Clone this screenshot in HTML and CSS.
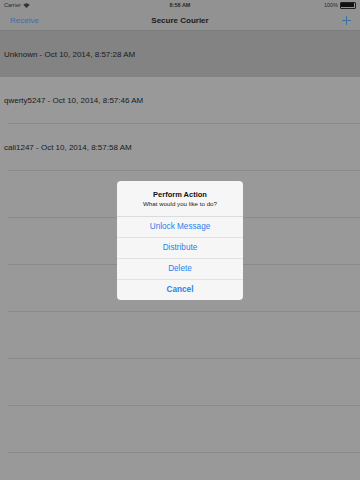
FILE: index.html
```html
<!DOCTYPE html>
<html lang="en">
<head>
    <meta charset="UTF-8">
    <meta name="viewport" content="width=device-width, initial-scale=1.0">
    <title>Secure Courier</title>
    <link rel="stylesheet" href="styles.css">
</head>
<body>
    <div class="screen">
        <div class="status-bar">
            <div class="status-left">Carrier
                <svg class="wifi" width="7" height="5" viewBox="0 0 14 10">
                    <path d="M7 10 L0.5 3.5 A9.5 9.5 0 0 1 13.5 3.5 Z" fill="#333"/>
                </svg>
            </div>
            <div class="status-time">8:58 AM</div>
            <div class="status-right">100%
                <span class="battery"><span class="battery-level"></span></span>
            </div>
        </div>
        <div class="nav-bar">
            <span class="nav-button">Receive</span>
            <span class="nav-title">Secure Courier</span>
            <svg class="nav-add" width="9" height="9" viewBox="0 0 9 9">
                <path d="M4.5 0 V9 M0 4.5 H9" stroke="#3e6fa3" stroke-width="1"/>
            </svg>
        </div>
        <div class="list">
            <div class="row selected">Unknown - Oct 10, 2014, 8:57:28 AM</div>
            <div class="row">qwerty5247 - Oct 10, 2014, 8:57:46 AM</div>
            <div class="row">cali1247 - Oct 10, 2014, 8:57:58 AM</div>
            <div class="row"></div>
            <div class="row"></div>
            <div class="row"></div>
            <div class="row"></div>
            <div class="row"></div>
            <div class="row"></div>
        </div>

        <div class="overlay">
            <div class="alert">
                <div class="alert-head">
                    <div class="alert-title">Perform Action</div>
                    <div class="alert-message">What would you like to do?</div>
                </div>
                <div class="alert-button">Unlock Message</div>
                <div class="alert-button">Distribute</div>
                <div class="alert-button">Delete</div>
                <div class="alert-button cancel">Cancel</div>
            </div>
        </div>
    </div>
</body>
</html>
```

FILE: styles.css
```css
body {
    font-family: "Liberation Sans", Arial, sans-serif;
    margin: 0;
    padding: 0;
    background-color: #999999;
    color: #1a1a1a;
}

.screen {
    position: relative;
    width: 360px;
    height: 480px;
    overflow: hidden;
}

.status-bar {
    height: 10px;
    display: flex;
    align-items: center;
    justify-content: space-between;
    padding: 0 4px;
    font-size: 5.5px;
    background-color: #929292;
    color: #2a2a2a;
}

.status-left,
.status-right {
    width: 60px;
    display: flex;
    align-items: center;
    gap: 2px;
}

.status-right {
    justify-content: flex-end;
}

.status-time {
    font-weight: bold;
}

.battery {
    width: 13px;
    height: 4px;
    border: 0.5px solid #222;
    border-radius: 1px;
    display: flex;
    padding: 0.5px;
}

.battery-level {
    flex: 1;
    background-color: #111;
}

.nav-bar {
    height: 20px;
    display: flex;
    align-items: center;
    justify-content: space-between;
    padding: 0 9px 0 10px;
    background-color: #929292;
    border-bottom: 1px solid #7d7d7d;
    position: relative;
}

.nav-button {
    color: #3e6fa3;
    font-size: 8px;
}

.nav-title {
    position: absolute;
    left: 0;
    right: 0;
    text-align: center;
    font-size: 8px;
    font-weight: bold;
    color: #1a1a1a;
    pointer-events: none;
}

.list {
    display: flex;
    flex-direction: column;
}

.row {
    height: 47px;
    display: flex;
    align-items: center;
    padding-left: 4px;
    font-size: 8px;
    color: #1a1a1a;
    background: linear-gradient(#8a8a8a, #8a8a8a) no-repeat 8px 100% / calc(100% - 8px) 1px;
}

.row.selected {
    background: #838383;
    height: 46px;
}

.overlay {
    position: absolute;
    top: 0;
    left: 0;
    right: 0;
    bottom: 0;
    display: flex;
    align-items: center;
    justify-content: center;
}

.alert {
    width: 126px;
    background-color: #f6f6f6;
    border-radius: 4px;
    overflow: hidden;
}

.alert-head {
    padding: 9px 4px 9px;
    text-align: center;
    border-bottom: 1px solid #dcdcdc;
}

.alert-title {
    font-size: 7.5px;
    font-weight: bold;
    color: #111;
}

.alert-message {
    font-size: 6.2px;
    color: #222;
    margin-top: 1px;
}

.alert-button {
    height: 20px;
    display: flex;
    align-items: center;
    justify-content: center;
    font-size: 8.2px;
    color: #2a7ff0;
    border-bottom: 1px solid #e2e2e2;
}

.alert-button.cancel {
    font-weight: bold;
    border-bottom: none;
}
```
